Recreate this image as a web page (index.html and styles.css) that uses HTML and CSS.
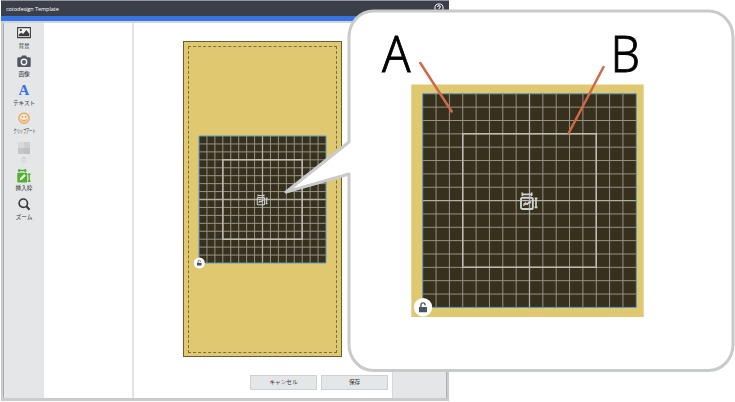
FILE: index.html
```html
<!DOCTYPE html>
<html lang="ja">
<head>
<meta charset="utf-8">
<title>cotodesign Template</title>
<link rel="stylesheet" href="styles.css">
</head>
<body>
<svg class="defs" width="0" height="0" aria-hidden="true">
  <defs>
    <symbol id="mesh" viewBox="0 0 16 16" overflow="visible">
      <path class="mesh-fill" d="M0 0h16v16H0z"/>
      <path class="mesh-line" d="M1 0v16M2 0v16M3 0v16M4 0v16M5 0v16M6 0v16M7 0v16M9 0v16M10 0v16M11 0v16M12 0v16M13 0v16M14 0v16M15 0v16M0 1h16M0 2h16M0 3h16M0 4h16M0 5h16M0 6h16M0 7h16M0 9h16M0 10h16M0 11h16M0 12h16M0 13h16M0 14h16M0 15h16"/>
      <path class="mesh-axis" d="M8 0v16M0 8h16"/>
      <path class="mesh-frame" d="M3 3h10v10H3z"/>
      <path class="mesh-edge" d="M0 0h16v16H0z"/>
    </symbol>
    <symbol id="insert" viewBox="0 0 18 18">
      <rect x="1" y="5.800" width="11.800" height="11.200" rx="1.600" fill="none" stroke="currentColor" stroke-width="1.900"/>
      <path d="M1.500 2.300h11M16 5.500v10.500M2.300.6v3.400M11.700.6v3.400M14.600 6.300h2.900M14.600 15.300h2.900" fill="none" stroke="currentColor" stroke-width="1.700"/>
      <path d="M3.300 14.200v-2.400l2.400-1.800 1.200 1.200 2.800-2.700 1.400 1.400v1.200l-2 .4-1.600 1.700-1.600-.4z" fill="currentColor"/>
      <path d="M3.500 8.500h3" stroke="currentColor" stroke-width="1.200"/>
    </symbol>
    <symbol id="lock" viewBox="0 0 8 10">
      <path d="M0 4.800h8V10H0z" fill="currentColor"/>
      <path d="M2 5V2.800a2 2 0 0 1 4 0v.6" fill="none" stroke="currentColor" stroke-width="1.300"/>
    </symbol>
  </defs>
</svg>

<div class="app">
  <header class="titlebar">
    <span class="title">cotodesign Template</span>
    <svg class="help" viewBox="0 0 10 10"><circle cx="5" cy="5" r="4.100"/><path d="M3.600 4q0-1.400 1.400-1.400T6.400 4Q6.400 4.700 5 5.200V6M5 6.800v.8"/></svg>
  </header>
  <div class="accent"></div>
  <div class="workspace">
    <nav class="tools">
      <div class="tool">
        <svg viewBox="0 0 14 14"><path d="M.6 1.600h12.800v10H.6z" fill="#f4f4f4" stroke="#3d3d3d" stroke-width="1.100"/><circle cx="3.800" cy="4.200" r="1.100" fill="#3d3d3d"/><path d="M1.800 10.300V8.500l2.500-2L6 8l3.500-4 2.800 4v2.300z" fill="#3d3d3d"/></svg>
        <span>背景</span>
      </div>
      <div class="tool">
        <svg viewBox="0 0 14 14"><path d="M1.500 2.300H4L5 .4h4l1 1.900h2.500a1.200 1.200 0 0 1 1.200 1.200v7.200a1.200 1.200 0 0 1-1.200 1.200h-11A1.200 1.200 0 0 1 .3 10.700V3.500a1.200 1.200 0 0 1 1.200-1.200z" fill="#505762"/><circle cx="7" cy="7" r="2.700" fill="#505762" stroke="#f0f0f2" stroke-width="1.400"/></svg>
        <span>画像</span>
      </div>
      <div class="tool">
        <span class="letter-icon">A</span>
        <span>テキスト</span>
      </div>
      <div class="tool">
        <svg viewBox="0 0 14 14"><circle cx="7" cy="6.300" r="5.100" fill="none" stroke="#f3a02f" stroke-width="1.200"/><path d="M5.300 3.700v2M8.700 3.700v2M4.200 7.500q2.800 3.200 5.600 0" fill="none" stroke="#f3a02f" stroke-width="1.200"/></svg>
        <span class="narrow">クリップアート</span>
      </div>
      <div class="tool disabled">
        <svg viewBox="0 0 14 14"><path d="M1 2h6v6H1z" fill="#d8d9da"/><path d="M7 2h6v6H7z" fill="#cdcecf"/><path d="M1 8h6v6H1z" fill="#c5c6c8"/><path d="M7 8h6v6H7z" fill="#bfc0c2"/></svg>
        <span>色</span>
      </div>
      <div class="tool">
        <svg viewBox="0 0 14 14"><rect x=".3" y="3.800" width="9.900" height="9.700" rx="1" fill="#55b030"/><path d="M1 1.500h8.500M12.200 4.500v8.500M2.200 0v3M8.200 0v3M10.800 5.300h2.800M10.800 12.200h2.800" stroke="#55b030" stroke-width="1.400" fill="none"/><path d="M2.700 11.300l.5-2.200 4-4 1.700 1.700-4 4z" fill="#e9f5e4"/></svg>
        <span>挿入枠</span>
      </div>
      <div class="tool">
        <svg viewBox="0 0 14 14"><circle cx="6.300" cy="6.200" r="4.200" fill="none" stroke="#3d3d3d" stroke-width="1.700"/><path d="M9.400 9.300l3.100 3.500" stroke="#3d3d3d" stroke-width="2.100"/></svg>
        <span>ズーム</span>
      </div>
    </nav>
    <aside class="list"></aside>
    <main class="stage">
      <div class="card">
        <div class="safe-area"></div>
        <svg class="card-mesh" viewBox="0 0 127 127">
          <use href="#mesh" width="127" height="127"/>
          <use href="#insert" class="mark" x="57.500" y="58" width="11.500" height="11.500"/>
          <circle class="knob" cx="0.300" cy="127" r="5.500"/>
          <use href="#lock" class="lock" x="-2.200" y="123.800" width="5" height="6"/>
        </svg>
      </div>
      <div class="actions">
        <button class="btn">キャンセル</button>
        <button class="btn">保存</button>
      </div>
    </main>
    <aside class="properties"></aside>
  </div>
</div>

<svg class="callout" viewBox="0 0 735 402">
  <path class="bubble" d="M373.500 11H708.500A24.500 26 0 0 1 733 37V344.500A24.500 26 0 0 1 708.500 370.500H373.500A24.500 26 0 0 1 349 344.500V174L286 192 349 142V37A24.500 26 0 0 1 373.500 11z"/>
  <path class="sheet" d="M411.300 84.500H643.700V317H411.300z"/>
  <use href="#mesh" x="422.700" y="93.800" width="213.600" height="213.600"/>
  <use href="#insert" class="mark" x="520" y="192" width="18" height="18"/>
  <circle class="knob" cx="423" cy="307.300" r="9.200"/>
  <use href="#lock" class="lock" x="418.800" y="302" width="8.400" height="10.500"/>
  <path class="leader" d="M420.300 63L451.700 111.500M603.500 67L568.500 133.500"/>
  <text class="tag" x="382" y="72.200" textLength="28.500" lengthAdjust="spacingAndGlyphs">A</text>
  <text class="tag" x="610.500" y="72.200" textLength="29.500" lengthAdjust="spacingAndGlyphs">B</text>
</svg>
</body>
</html>
```
FILE: styles.css
```css
* { box-sizing: border-box; }

body {
  margin: 0;
  width: 735px;
  height: 402px;
  overflow: hidden;
  background: #fff;
  color: #333;
  font-family: "Noto Sans CJK JP", sans-serif;
  font-size: 6px;
}

.defs { position: absolute; }

.app {
  display: flex;
  flex-direction: column;
  width: 448px;
  height: 401px;
  margin-left: 1px;
}

.titlebar {
  display: flex;
  align-items: center;
  justify-content: space-between;
  flex: none;
  height: 16px;
  padding: 0 5px;
  border-top: 1px solid #92979d;
  background: #3a3f4a;
  color: #fff;
}

.title {
  font: 5.6px/10px "Open Sans", sans-serif;
  letter-spacing: -0.09px;
}

.help {
  width: 10px;
  height: 10px;
  margin-top: -1px;
  fill: none;
  stroke: #fff;
  stroke-width: 1;
}

.accent {
  flex: none;
  height: 5px;
  background: #3673e3;
}

.workspace {
  display: flex;
  flex: 1;
  min-height: 0;
  border: solid #c9cbcd;
  border-width: 2px 2px 3px;
  border-top-color: #d3d4d5;
}

.tools {
  display: flex;
  flex-direction: column;
  gap: 2.5px;
  width: 41px;
  padding-top: 3px;
  border-left: 1px solid #abaeb1;
  background: #e4e6e8;
}

.tool {
  display: flex;
  flex-direction: column;
  align-items: center;
  height: 26px;
}

.tool svg {
  flex: none;
  width: 14px;
  height: 14px;
}

.tool span {
  margin-top: 2.5px;
  font-size: 5.6px;
  line-height: 7px;
  white-space: nowrap;
}

.tool .narrow { transform: scaleX(.56); }

.disabled { color: #c6c8ca; }

.tool .letter-icon {
  height: 14px;
  margin: 0;
  color: #3673e3;
  font: bold 15px/14px "Liberation Serif", serif;
}

.list {
  width: 90px;
  border-right: 2px solid #e3e4e6;
}

.stage {
  display: flex;
  flex-direction: column;
  justify-content: space-between;
  width: 258px;
  padding: 18px 4px 8px 49px;
}

.card {
  display: grid;
  width: 159px;
  height: 316px;
  padding: 4px 4px 3px;
  border: 1px solid #685e35;
  background: #e0c870;
}

.safe-area,
.card-mesh { grid-area: 1 / 1; }

.safe-area { border: 1px dashed #7d6f40; }

.card-mesh {
  width: 127px;
  height: 127px;
  margin: 89.5px 0 0 11px;
  overflow: visible;
}

.actions {
  display: flex;
  justify-content: flex-end;
  gap: 4px;
}

.btn {
  width: 67px;
  height: 15px;
  padding: 0;
  border: 1px solid #cfd1d3;
  background: #e4e6e8;
  color: #333;
  font: 5.6px/13px "Noto Sans CJK JP", sans-serif;
}

.properties {
  flex: 1;
  border-right: 1px solid #abaeb1;
  border-left: 1px solid #d5d8dc;
  background: #e4e6e8;
}

.mesh-fill { fill: #36301d; }

.mesh-line,
.mesh-axis,
.mesh-frame,
.mesh-edge {
  fill: none;
  vector-effect: non-scaling-stroke;
}

.mesh-line { stroke: #979388; stroke-width: 1px; }
.mesh-axis { stroke: #b1aea7; stroke-width: 1.3px; }
.mesh-frame { stroke: #bfbcb8; stroke-width: 1.5px; }
.mesh-edge { stroke: #5b9bc0; stroke-width: 1px; }

.mark { color: #d0d2d0; }
.knob { fill: #fff; }
.lock { color: #4d535f; }

.callout {
  position: absolute;
  top: 0;
  left: 0;
  width: 735px;
  height: 402px;
}

.bubble {
  fill: #fff;
  stroke: #c9caca;
  stroke-width: 3px;
  stroke-linejoin: round;
}

.sheet { fill: #e0c870; }

.leader {
  fill: none;
  stroke: #cf694a;
  stroke-width: 2.5px;
  stroke-linecap: round;
}

.tag {
  fill: #000;
  stroke: #000;
  stroke-width: .8px;
  font: 300 50px "Noto Sans", "Noto Sans CJK JP", sans-serif;
}
```
